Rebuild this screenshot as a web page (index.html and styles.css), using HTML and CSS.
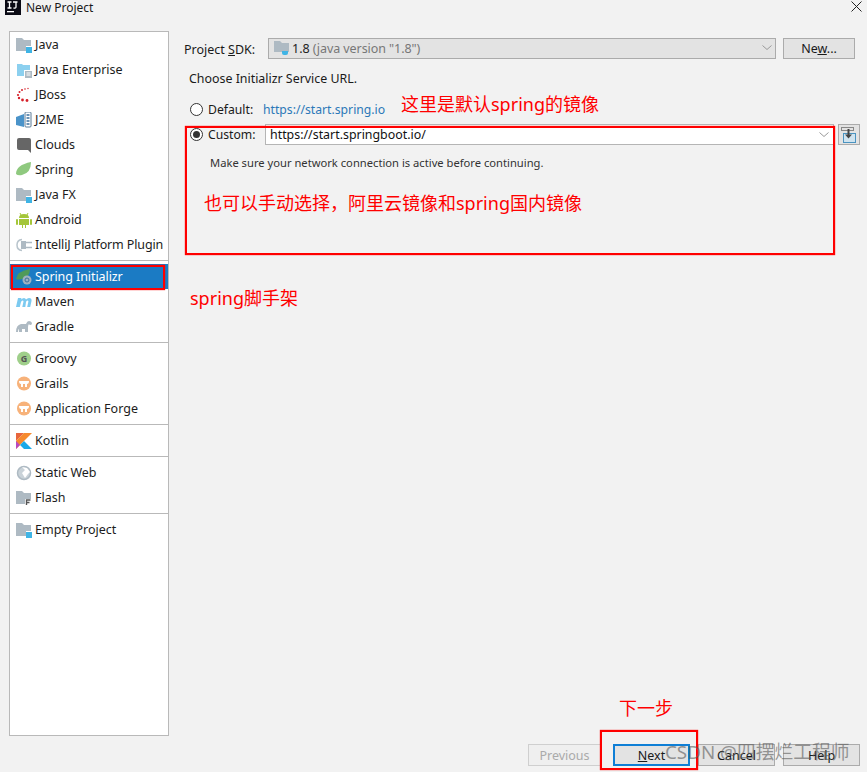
FILE: index.html
```html
<!DOCTYPE html>
<html lang="en">
<head>
<meta charset="utf-8">
<title>New Project</title>
<link rel="stylesheet" href="styles.css">
</head>
<body>
<div class="window">
  <header class="titlebar">
    <svg class="appicon" width="16" height="16" viewBox="0 0 16 16"><rect width="16" height="16" fill="#0a0a14"/><rect x="2" y="12" width="7" height="1.3" fill="#fff"/><path d="M2.500 3h4M4.500 3v6M2.500 9h4M8 3h4.500M11 3v5q0 1.500-2.500 1" fill="none" stroke="#fff" stroke-width="1.300"/></svg>
    <span class="title">New Project</span>
    <svg class="close" width="11" height="11" viewBox="0 0 11 11"><path d="M.5.5l10 10M10.500.5l-10 10" stroke="#222" stroke-width="1"/></svg>
  </header>
  <div class="main">
    <nav class="sidebar">
      <ul class="group">
        <li class="item"><svg class="ic" viewBox="0 0 16 16"><path d="M0 1h6l2 2h7v6h-5v5H0z" fill="#aebac3"/><rect x="10" y="10" width="6" height="6" fill="#3fb4e5"/></svg>Java</li>
        <li class="item"><svg class="ic" viewBox="0 0 16 16"><path d="M1 2h5l1 1h7v5H8v6H1z" fill="#8cd0ef"/><rect x="9" y="9" width="7" height="7" fill="#aebac3"/><path d="M10.500 11h4M10.500 13h4" stroke="#fff"/></svg>Java Enterprise</li>
        <li class="item"><svg class="ic" viewBox="0 0 16 16"><g fill="#d6202a"><circle cx="9" cy="2" r=".8"/><circle cx="12" cy="1.500" r=".7"/><circle cx="6" cy="3" r="1"/><circle cx="3.500" cy="5" r="1"/><circle cx="2" cy="8" r="1.100"/><circle cx="3" cy="11" r="1.200"/><circle cx="6.500" cy="13" r="1.400"/><circle cx="11" cy="13.500" r="1.400"/></g></svg>JBoss</li>
        <li class="item"><svg class="ic" viewBox="0 0 16 16"><path d="M0 5l8-3v13l-8-2z" fill="#4a93c9"/><rect x="9" y="0" width="6" height="15" rx="1" fill="#fff" stroke="#5a7b96"/><path d="M10.500 3h3M10.500 6h3M10.500 9h3M10.500 12h3" stroke="#3a6f9f" stroke-width="1.400"/></svg>J2ME</li>
        <li class="item"><svg class="ic" viewBox="0 0 16 16"><path d="M3 1h10q2 0 2 2v13l-3-3H3q-2 0-2-2V3q0-2 2-2z" fill="#666"/></svg>Clouds</li>
        <li class="item"><svg class="ic" viewBox="0 0 16 16"><path d="M15 0Q15 11 6 13Q2 14 0 12Q0 3 15 0z" fill="#8fc97f"/></svg>Spring</li>
        <li class="item"><svg class="ic" viewBox="0 0 16 16"><path d="M0 1h6l2 2h7v6h-5v5H0z" fill="#aebac3"/><rect x="10" y="10" width="6" height="6" fill="#3fb4e5"/></svg>Java FX</li>
        <li class="item"><svg class="ic" viewBox="0 0 16 16"><path d="M4 1l1 2M12 1l-1 2" stroke="#a4c639"/><path d="M3 6q0-4 5-4t5 4z" fill="#a4c639"/><path d="M3 7h10v6H10v3H9v-3H7v3H6v-3H3z" fill="#a4c639"/><rect x="0" y="7" width="2" height="6" rx="1" fill="#a4c639"/><rect x="14" y="7" width="2" height="6" rx="1" fill="#a4c639"/></svg>Android</li>
        <li class="item tight"><svg class="ic" viewBox="0 0 16 16"><path d="M6 2.500Q1 3 1 8t5 5.500" fill="none" stroke="#b8c4cc" stroke-width="1.500"/><path d="M5 4h5v8H5z" fill="#aebac3"/><path d="M10 5.500h6M10 10.500h6" stroke="#aebac3" stroke-width="1.500"/></svg>IntelliJ Platform Plugin</li>
      </ul>
      <ul class="group">
        <li class="item selected"><svg class="ic" viewBox="0 0 16 16"><path d="M14 0Q14 8 6 10Q2 11 0 10Q1 2 14 0z" fill="#4f9a5a"/><circle cx="11" cy="11" r="4.500" fill="#9fb2c2"/><circle cx="11" cy="11" r="2" fill="none" stroke="#3d6f9f"/></svg>Spring Initializr</li>
        <li class="item"><svg class="ic" viewBox="0 0 16 16"><path d="M0 13L2 4h3.500L5 5.500Q6.500 4 8 4t2 1.500Q11.500 4 13 4q3 0 2.500 3l-1.300 6h-3l1.200-5.500q0-1-1-1t-1.400 1.500L9.300 13h-3l1.200-5.500q0-1-1-1T5 8L3.800 13z" fill="#7ccaf0"/></svg>Maven</li>
        <li class="item"><svg class="ic" viewBox="0 0 16 16"><path d="M0 13Q0 6 5 5h5q1-3 3-3t3 2q0 2-1.500 2T13 5q-1 1-1 3v5H9v-3H6v3H3v-3Q2 10 2 13z" fill="#aebac3"/></svg>Gradle</li>
      </ul>
      <ul class="group">
        <li class="item"><svg class="ic" viewBox="0 0 16 16"><circle cx="8" cy="7.500" r="7" fill="#9fcf8a"/><text class="glyph" x="8" y="10.500" text-anchor="middle">G</text></svg>Groovy</li>
        <li class="item"><svg class="ic" viewBox="0 0 16 16"><circle cx="8" cy="7.500" r="7" fill="#f7b27a"/><path d="M3 5h10q0 3-2 3v3H9V8H7v3H5V8Q3 8 3 5z" fill="#fff"/></svg>Grails</li>
        <li class="item"><svg class="ic" viewBox="0 0 16 16"><circle cx="8" cy="7.500" r="7" fill="#f7b27a"/><path d="M3 5h10q0 3-2 3v3H9V8H7v3H5V8Q3 8 3 5z" fill="#fff"/></svg>Application Forge</li>
      </ul>
      <ul class="group">
        <li class="item"><svg class="ic" viewBox="0 0 14 14"><path d="M0 0h7L0 7z" fill="#e8663d"/><path d="M7 0h7L0 14V7z" fill="#f68a2e"/><path d="M7 7l7 7H7L3.500 10.500z" fill="#19a9e8"/><path d="M0 14V7l3.500 3.500z" fill="#b74ac0"/></svg>Kotlin</li>
      </ul>
      <ul class="group">
        <li class="item"><svg class="ic" viewBox="0 0 16 16"><circle cx="8" cy="8" r="6.500" fill="#c9d2d8" stroke="#aebac3" stroke-width="1.500"/><path d="M6 2l3 3-3 3 3 5 3-4 2-2-3-4z" fill="#fff"/></svg>Static Web</li>
        <li class="item"><svg class="ic" viewBox="0 0 16 16"><path d="M0 1h6l2 2h7v6H9v5H0z" fill="#aebac3"/><path d="M10.500 15v-5h4M10.500 12.500h3" fill="none" stroke="#555" stroke-width="1.400"/></svg>Flash</li>
      </ul>
      <ul class="group last">
        <li class="item"><svg class="ic" viewBox="0 0 16 16"><path d="M0 1h6l2 2h7v6h-5v5H0z" fill="#aebac3"/><rect x="10" y="10" width="6" height="6" fill="#3fb4e5"/></svg>Empty Project</li>
      </ul>
    </nav>
    <section class="content">
      <div class="sdk-row">
        <label class="sdk-label">Project <u>S</u>DK:</label>
        <div class="combo">
          <svg class="sdk-icon" viewBox="0 0 16 16"><path d="M0 1h6l2 2h7v9H0z" fill="#aebac3"/><path d="M8 11h6v2q0 2-2 2h-2q-2 0-2-2z" fill="#3fb4e5"/></svg>
          <span class="sdk-ver">1.8</span><span class="sdk-desc">(java version "1.8")</span>
          <svg class="chev" width="10" height="6" viewBox="0 0 10 6"><path d="M.5.500l4.500 4 4.500-4" fill="none" stroke="#999"/></svg>
        </div>
        <button class="btn new">Ne<u>w</u>...</button>
      </div>
      <p class="choose">Choose Initializr Service URL.</p>
      <div class="default-row">
        <span class="radio"></span><span class="rlabel">Default:</span>
        <a class="link">https://start.spring.io</a>
      </div>
      <div class="custom-row">
        <span class="radio on"></span><span class="rlabel custom">Custom:</span>
        <div class="url">
          <span>https://start.springboot.io/</span>
          <svg class="chev" width="10" height="6" viewBox="0 0 10 6"><path d="M.5.500l4.500 4 4.500-4" fill="none" stroke="#999"/></svg>
        </div>
        <button class="iconbtn"><svg width="18" height="18" viewBox="0 0 18 18"><rect x="1.500" y="1.500" width="12" height="3" fill="none" stroke="#888"/><rect x="3.500" y="7.500" width="12" height="9" fill="#cfe3ef" stroke="#4a93c0"/><path d="M8.500 3v6" stroke="#444" stroke-width="2"/><path d="M5 8.500h7L8.500 12.500z" fill="#444"/></svg></button>
      </div>
      <p class="hint">Make sure your network connection is active before continuing.</p>
    </section>
  </div>
  <footer class="footer">
    <button class="btn foot disabled">Previous</button>
    <button class="btn foot next"><u>N</u>ext</button>
    <button class="btn foot">Cancel</button>
    <button class="btn foot">Help</button>
  </footer>
  <div class="box b-side"></div>
  <div class="box b-custom"></div>
  <div class="box b-next"></div>
  <span class="note n1">这里是默认spring的镜像</span>
  <span class="note n2">也可以手动选择，阿里云镜像和spring国内镜像</span>
  <span class="note n3">spring脚手架</span>
  <span class="note n4">下一步</span>
  <span class="watermark">CSDN @四摆烂工程师</span>
</div>
</body>
</html>
```

FILE: styles.css
```css
* { box-sizing: border-box; }
html, body { margin: 0; padding: 0; }
body { background: #f2f2f2; font-family: "Noto Sans", "Open Sans", sans-serif; color: #1a1a1a; }
.window { position: relative; width: 867px; height: 772px; overflow: hidden; background: #f2f2f2; }
.titlebar { display: flex; align-items: center; height: 16px; padding-left: 5px; }
.appicon { width: 16px; height: 16px; flex: none; margin-top: -2px; }
.title { margin-left: 5px; font-size: 12px; line-height: 16px; }
.close { margin-left: auto; margin-right: 5px; margin-top: -4px; }
.main { display: flex; height: 721px; padding: 15px 0 0 9px; }
.sidebar { width: 160px; height: 705px; background: #fff; border: 1px solid #b9b9b9; flex: none; }
.group { list-style: none; margin: 0; padding: 3px 0; border-bottom: 1px solid #b9b9b9; }
.group.last { border-bottom: 0; }
.group:first-child { padding-top: 0; }
.item { display: flex; align-items: center; height: 25px; padding-left: 6px; font-size: 12.500px; white-space: nowrap; color: #1c1c1c; }
.item.tight { letter-spacing: -0.130px; }
.item.selected { background: #1b7bc4; color: #fff; letter-spacing: -0.080px; }
.ic { width: 16px; height: 16px; margin-right: 3px; flex: none; }
.glyph { font-size: 9px; font-weight: 700; fill: #555; font-family: "Noto Sans", sans-serif; }
.content { flex: 1; padding: 7px 7px 0 15px; min-width: 0; position: relative; }
.sdk-row { display: flex; align-items: center; height: 20px; }
.sdk-label { width: 84px; font-size: 12.500px; flex: none; padding-top: 2px; }
.combo { display: flex; align-items: center; width: 508px; height: 21px; background: #e3e3e3; border: 1px solid #ababab; padding: 0 3px 0 5px; font-size: 12.500px; }
.sdk-icon { width: 16px; height: 16px; margin-right: 2px; }
.sdk-ver { color: #222; }
.sdk-desc { color: #777; margin-left: 3px; letter-spacing: -0.070px; }
.chev { margin-left: auto; flex: none; }
.btn { font-family: inherit; background: #e3e3e3; border: 1px solid #ababab; color: #1a1a1a; font-size: 12.500px; padding: 0; }
.new { width: 72px; height: 21px; margin-left: 7px; }
.choose { margin: 11px 0 0 5px; font-size: 12.400px; line-height: 20px; }
.default-row { display: flex; align-items: center; height: 20px; margin: 10px 0 0 6px; }
.radio { width: 13px; height: 13px; border-radius: 50%; border: 1px solid #333; background: #fff; flex: none; position: relative; }
.radio.on::after { content: ""; position: absolute; inset: 2px; border-radius: 50%; background: #333; }
.rlabel { margin-left: 5px; font-size: 12.200px; width: 55px; flex: none; }
.rlabel.custom { width: 57px; }
.link { color: #2b78b8; font-size: 12.200px; }
.custom-row { display: flex; align-items: center; height: 21px; margin: 5px 0 0 6px; }
.url { display: flex; align-items: center; width: 569px; height: 21px; flex: none; background: #fff; border: 1px solid #b5b5b5; padding: 0 4px 0 4px; font-size: 12.400px; color: #111; }
.iconbtn { width: 22px; height: 21px; flex: none; margin-left: 4px; background: #e3e3e3; border: 1px solid #ababab; padding: 0; display: flex; align-items: center; justify-content: center; }
.hint { margin: 9px 0 0 26px; font-size: 11.200px; line-height: 18px; color: #333; }
.footer { display: flex; height: 22px; margin-top: 7px; padding-left: 528px; }
.foot { height: 22px; width: 77px; }
.foot.disabled { width: 73px; background: #efefef; border-color: #cfcfcf; color: #aaa; }
.foot.next { margin-left: 12px; border: 2px solid #0f7fd6; }
.foot:nth-child(3) { margin-left: 8px; width: 77px; }
.foot:nth-child(4) { margin-left: 8px; }
.box { position: absolute; border: 2px solid #f00; box-shadow: 0 0 1px #f00; pointer-events: none; }
.b-side { left: 11px; top: 265px; width: 154px; height: 25px; }
.b-custom { left: 185px; top: 126px; width: 650px; height: 129px; }
.b-next { left: 600px; top: 730px; width: 98px; height: 40px; }
.note { position: absolute; color: #f00; font-family: "Noto Sans", "Noto Sans CJK SC", sans-serif; font-size: 18px; line-height: 22px; white-space: nowrap; }
.n1 { left: 401px; top: 93px; }
.n2 { left: 204px; top: 192px; }
.n3 { left: 190px; top: 287px; }
.n4 { left: 619px; top: 697px; }
.watermark { position: absolute; left: 665px; top: 740px; font-size: 18.800px; line-height: 24px; color: rgba(90,90,90,.6); font-family: "Noto Sans", "Noto Sans CJK SC", sans-serif; white-space: nowrap; }
```
